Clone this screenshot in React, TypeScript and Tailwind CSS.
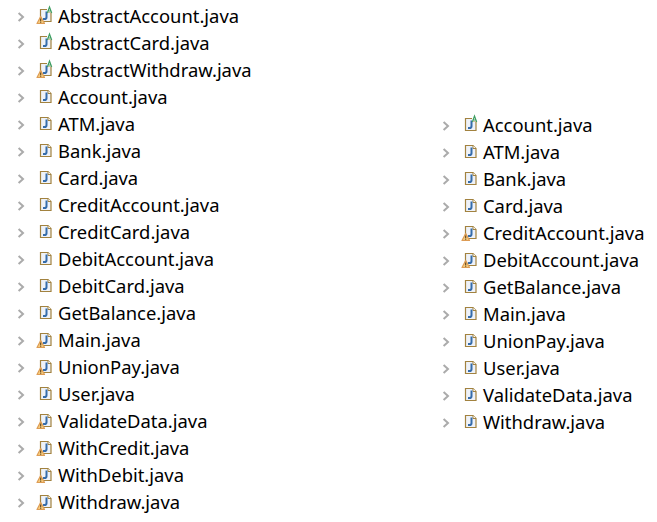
import React from "react";

function Arrow() {
  return (
    <svg width="10" height="27" viewBox="0 0 10 27" className="shrink-0">
      <path d="M2.6 11 L7 15 L2.6 19" fill="none" stroke="#ababab" strokeWidth="2" />
    </svg>
  );
}

function FileIcon({ warn, a }: { warn?: boolean; a?: boolean }) {
  return (
    <svg width="20" height="27" viewBox="0 0 20 27" className="shrink-0">
      <path d="M4.5 7.5 H12 L15 10.5 V19.5 H4.5 Z" fill="#eef2f9" stroke="#a2823f" strokeWidth="1.2" />
      <path d="M12 7.5 V10.5 H15" fill="#fff" stroke="#a2823f" strokeWidth="1" />
      <path d="M10.5 9.5 V15.2 Q10.5 17 8.6 17 H7" fill="none" stroke="#356cab" strokeWidth="2" />
      {a && (
        <>
          <rect x="11" y="3.5" width="6" height="7" fill="#fff" />
          <path d="M11.3 11 L13.5 5 L15.7 11 M12.2 9 H14.8" fill="none" stroke="#3f9e63" strokeWidth="1.2" />
        </>
      )}
      {warn && (
        <>
          <path d="M4.7 14.5 L8.5 21.5 H1 Z" fill="#f6cb7c" stroke="#dd9c55" strokeWidth="1.2" strokeLinejoin="round" />
          <path d="M4.7 16.5 V19 M4.7 19.6 V20.8" stroke="#5c3f18" strokeWidth="1.1" />
        </>
      )}
    </svg>
  );
}

type Item = [string, boolean?, boolean?];

const left: Item[] = [
  ["AbstractAccount.java", true, true],
  ["AbstractCard.java", false, true],
  ["AbstractWithdraw.java", true, true],
  ["Account.java"],
  ["ATM.java"],
  ["Bank.java"],
  ["Card.java"],
  ["CreditAccount.java"],
  ["CreditCard.java"],
  ["DebitAccount.java"],
  ["DebitCard.java"],
  ["GetBalance.java"],
  ["Main.java", true],
  ["UnionPay.java", true],
  ["User.java"],
  ["ValidateData.java", true],
  ["WithCredit.java", true],
  ["WithDebit.java", true],
  ["Withdraw.java", true],
];

const right: Item[] = [
  ["Account.java", false, true],
  ["ATM.java"],
  ["Bank.java"],
  ["Card.java"],
  ["CreditAccount.java", true],
  ["DebitAccount.java", true],
  ["GetBalance.java"],
  ["Main.java"],
  ["UnionPay.java"],
  ["User.java"],
  ["ValidateData.java"],
  ["Withdraw.java"],
];

function Tree({ items }: { items: Item[] }) {
  return (
    <ul className="flex flex-col">
      {items.map(([name, warn, a]) => (
        <li key={name} className="flex h-[27px] items-center">
          <Arrow />
          <span className="ml-[10px] mr-[2px]">
            <FileIcon warn={warn} a={a} />
          </span>
          <span className="text-[18.4px] whitespace-nowrap text-black">{name}</span>
        </li>
      ))}
    </ul>
  );
}

export default function App() {
  return (
    <div className="flex h-[522px] w-[657px] bg-white pl-[16px] pt-[2px] font-['Noto_Sans','Open_Sans',sans-serif]">
      <div className="w-[425px]">
        <Tree items={left} />
      </div>
      <div className="pt-[109px]">
        <Tree items={right} />
      </div>
    </div>
  );
}
